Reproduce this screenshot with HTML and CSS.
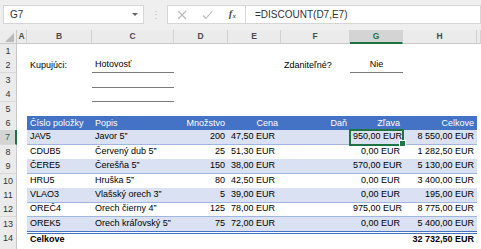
FILE: index.html
```html
<!DOCTYPE html>
<html>
<head>
    <title>Zoznam položiek</title>
    <link rel="stylesheet" href="styles.css">
</head>
<body>
    <div class="formula-bar">
        <div class="name-box">G7<span class="arrow"></span></div>
        <div class="grip">⋮</div>
        <div class="fx-box">
            <svg width="10" height="10" viewBox="0 0 10 10"><path d="M1 1L9 9M9 1L1 9" stroke="#b8b8b8" stroke-width="1.1" fill="none"/></svg>
            <svg width="11" height="10" viewBox="0 0 11 10"><path d="M1 5.5L4 8.5L10 1.5" stroke="#b8b8b8" stroke-width="1.1" fill="none"/></svg>
            <span class="fx">f<sub>x</sub></span>
        </div>
        <div class="formula">=DISCOUNT(D7,E7)</div>
    </div>

    <div class="sheet">
        <div class="row col-heads">
            <div class="corner"></div>
            <div class="ch">A</div>
            <div class="ch">B</div>
            <div class="ch">C</div>
            <div class="ch">D</div>
            <div class="ch">E</div>
            <div class="ch">F</div>
            <div class="ch selected">G</div>
            <div class="ch">H</div>
            <div class="ch"></div>
        </div>

        <div class="row">
            <div class="rh">1</div>
        </div>
        <div class="row">
            <div class="rh">2</div>
            <div class="cell"></div>
            <div class="cell">Kupujúci:</div>
            <div class="cell uline">Hotovosť</div>
            <div class="cell"></div>
            <div class="cell"></div>
            <div class="cell">Zdaniteľné?</div>
            <div class="cell uline center">Nie</div>
        </div>
        <div class="row">
            <div class="rh">3</div>
            <div class="cell"></div>
            <div class="cell"></div>
            <div class="cell uline"></div>
        </div>
        <div class="row">
            <div class="rh">4</div>
            <div class="cell"></div>
            <div class="cell"></div>
            <div class="cell uline"></div>
        </div>
        <div class="row">
            <div class="rh">5</div>
        </div>

        <div class="row head">
            <div class="rh">6</div>
            <div class="cell"></div>
            <div class="cell t">Číslo položky</div>
            <div class="cell t">Popis</div>
            <div class="cell t num">Množstvo</div>
            <div class="cell t num">Cena</div>
            <div class="cell t num">Daň</div>
            <div class="cell t num">Zľava</div>
            <div class="cell t num">Celkove</div>
        </div>
        <div class="row band">
            <div class="rh selected">7</div>
            <div class="cell"></div>
            <div class="cell t">JAV5</div>
            <div class="cell t">Javor 5”</div>
            <div class="cell t num">200</div>
            <div class="cell t">47,50 EUR</div>
            <div class="cell t"></div>
            <div class="cell t num active">950,00 EUR</div>
            <div class="cell t num">8 550,00 EUR</div>
        </div>
        <div class="row">
            <div class="rh">8</div>
            <div class="cell"></div>
            <div class="cell t">CDUB5</div>
            <div class="cell t">Červený dub 5”</div>
            <div class="cell t num">25</div>
            <div class="cell t">51,30 EUR</div>
            <div class="cell t"></div>
            <div class="cell t num">0,00 EUR</div>
            <div class="cell t num">1 282,50 EUR</div>
        </div>
        <div class="row band">
            <div class="rh">9</div>
            <div class="cell"></div>
            <div class="cell t">ČERE5</div>
            <div class="cell t">Čerešňa 5”</div>
            <div class="cell t num">150</div>
            <div class="cell t">38,00 EUR</div>
            <div class="cell t"></div>
            <div class="cell t num">570,00 EUR</div>
            <div class="cell t num">5 130,00 EUR</div>
        </div>
        <div class="row">
            <div class="rh">10</div>
            <div class="cell"></div>
            <div class="cell t">HRU5</div>
            <div class="cell t">Hruška 5”</div>
            <div class="cell t num">80</div>
            <div class="cell t">42,50 EUR</div>
            <div class="cell t"></div>
            <div class="cell t num">0,00 EUR</div>
            <div class="cell t num">3 400,00 EUR</div>
        </div>
        <div class="row band">
            <div class="rh">11</div>
            <div class="cell"></div>
            <div class="cell t">VLAO3</div>
            <div class="cell t">Vlašský orech 3”</div>
            <div class="cell t num">5</div>
            <div class="cell t">39,00 EUR</div>
            <div class="cell t"></div>
            <div class="cell t num">0,00 EUR</div>
            <div class="cell t num">195,00 EUR</div>
        </div>
        <div class="row">
            <div class="rh">12</div>
            <div class="cell"></div>
            <div class="cell t">OREČ4</div>
            <div class="cell t">Orech čierny 4”</div>
            <div class="cell t num">125</div>
            <div class="cell t">78,00 EUR</div>
            <div class="cell t"></div>
            <div class="cell t num">975,00 EUR</div>
            <div class="cell t num">8 775,00 EUR</div>
        </div>
        <div class="row band">
            <div class="rh">13</div>
            <div class="cell"></div>
            <div class="cell t">OREK5</div>
            <div class="cell t">Orech kráľovský 5”</div>
            <div class="cell t num">75</div>
            <div class="cell t">72,00 EUR</div>
            <div class="cell t"></div>
            <div class="cell t num">0,00 EUR</div>
            <div class="cell t num">5 400,00 EUR</div>
        </div>
        <div class="row total">
            <div class="rh">14</div>
            <div class="cell"></div>
            <div class="cell t">Celkove</div>
            <div class="cell t"></div>
            <div class="cell t"></div>
            <div class="cell t"></div>
            <div class="cell t"></div>
            <div class="cell t"></div>
            <div class="cell t num">32 732,50 EUR</div>
        </div>
        <div class="row">
            <div class="rh"></div>
        </div>
    </div>
</body>
</html>
```

FILE: styles.css
```css
* {
    margin: 0;
    padding: 0;
    box-sizing: border-box;
}

body {
    width: 481px;
    height: 249px;
    overflow: hidden;
    background: #fff;
    font-family: "Liberation Sans", Arial, sans-serif;
    font-size: 9px;
    color: #000;
}

/* formula bar */
.formula-bar {
    height: 30px;
    background: #efefef;
    display: flex;
    align-items: flex-start;
    padding-top: 5px;
}

.name-box {
    margin-left: 3px;
    width: 141px;
    height: 19px;
    background: #fff;
    border: 1px solid #d6d6d6;
    display: flex;
    align-items: center;
    justify-content: space-between;
    padding: 0 5px 0 6px;
    font-size: 10px;
    color: #333;
}

.name-box .arrow {
    width: 0;
    height: 0;
    border-left: 3px solid transparent;
    border-right: 3px solid transparent;
    border-top: 3px solid #666;
}

.grip {
    width: 23px;
    text-align: center;
    line-height: 19px;
    font-size: 10px;
    color: #bdbdbd;
}

.fx-box {
    width: 79px;
    height: 19px;
    background: #fff;
    border: 1px solid #d6d6d6;
    display: flex;
    align-items: center;
    justify-content: space-between;
    padding: 0 9px 0 9px;
}

.fx {
    font-family: "Liberation Serif", serif;
    font-style: italic;
    font-weight: bold;
    font-size: 11px;
    color: #555;
    line-height: 11px;
}

.fx sub {
    font-size: 7px;
    vertical-align: -1px;
}

.formula {
    flex: 1;
    height: 19px;
    background: #fff;
    border: 1px solid #d6d6d6;
    border-left: none;
    padding-left: 9px;
    line-height: 17px;
    font-size: 10px;
    color: #333;
}

/* sheet */
.row {
    display: grid;
    grid-template-columns: 17px 10px 65px 82px 54px 53px 69px 53px 74px 4px;
    height: 14.4px;
}

.col-heads {
    height: 14px;
    background: #ebebeb;
    border-bottom: 1px solid #c9c9c9;
}

.corner {
    border-right: 1px solid #c9c9c9;
    position: relative;
}

.corner::after {
    content: "";
    position: absolute;
    right: 2px;
    bottom: 2px;
    border-left: 9px solid transparent;
    border-bottom: 9px solid #b9b9b9;
}

.ch {
    text-align: center;
    font-weight: bold;
    font-size: 8.5px;
    line-height: 13px;
    color: #4a4a4a;
    border-right: 1px solid #d2d2d2;
}

.ch.selected {
    background: #d4d4d4;
    border-bottom: 2px solid #217346;
    color: #217346;
    line-height: 12px;
}

.rh {
    background: #ebebeb;
    border-right: 1px solid #c9c9c9;
    border-bottom: 1px solid #d9d9d9;
    text-align: center;
    font-size: 9px;
    line-height: 14px;
    color: #333;
}

.rh.selected {
    background: #d4d4d4;
    border-right: 2px solid #217346;
    color: #217346;
}

.cell {
    padding: 0 3px;
    line-height: 14px;
    white-space: nowrap;
    overflow: hidden;
}

.num {
    text-align: right;
}

.center {
    text-align: center;
}

.uline {
    border-bottom: 1px solid #7b7b7b;
    line-height: 13px;
}

/* table */
.t {
    border-bottom: 1px solid #9fb6e0;
    line-height: 13px;
}

.band .t {
    background: #d9e1f2;
}

.head .t {
    background: #4472c4;
    color: #fff;
    border-bottom: none;
    line-height: 14px;
}

.total .t {
    border-top: 3px double #4472c4;
    border-bottom: none;
    font-weight: bold;
    line-height: 11px;
}

.active {
    position: relative;
    overflow: visible;
    outline: 2px solid #217346;
    outline-offset: -1px;
}

.active::after {
    content: "";
    position: absolute;
    right: -3px;
    bottom: -3px;
    width: 5px;
    height: 5px;
    background: #217346;
    border: 1px solid #fff;
}
```
